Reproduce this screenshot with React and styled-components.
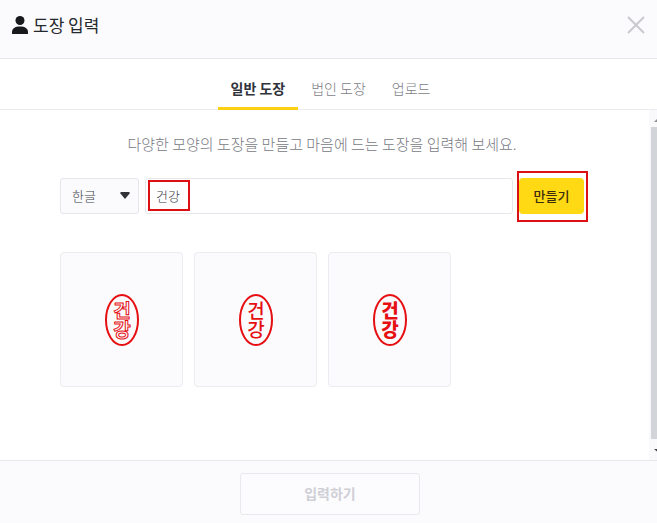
import React from 'react';
import styled, { createGlobalStyle } from 'styled-components';

const GlobalStyle = createGlobalStyle`
    * {
        box-sizing: border-box;
    }

    body {
        margin: 0;
        background: #fff;
    }

    body, button, input, select {
        font-family: "Noto Sans CJK KR", "Noto Sans", sans-serif;
    }
`;

const Dialog = styled.div`
    display: flex;
    flex-direction: column;
    min-height: 100vh;
    color: #25282d;
`;

const Header = styled.header`
    display: flex;
    align-items: center;
    justify-content: space-between;
    padding: 12px 12px 20px;
    background: #fbfbfe;
    border-bottom: 1px solid #e8e8ec;
`;

const Title = styled.h1`
    display: flex;
    align-items: center;
    gap: 5px;
    margin: 0;
    font-size: 17px;
    font-weight: 400;
    line-height: 26px;
`;

const CloseButton = styled.button`
    display: flex;
    padding: 0;
    border: 0;
    background: none;
    cursor: pointer;
`;

const Tabs = styled.nav`
    display: flex;
    justify-content: center;
    padding: 12px 0 0 4px;
    border-bottom: 1px solid #ebebee;
`;

const Tab = styled.button`
    padding: 5px 13px 7px;
    margin-bottom: -1px;
    border: 0;
    border-bottom: 3px solid ${props => (props.$active ? '#fccf12' : 'transparent')};
    background: none;
    color: ${props => (props.$active ? '#30333b' : '#7c7d86')};
    font-size: 14px;
    font-weight: ${props => (props.$active ? 700 : 300)};
    line-height: 24px;
    cursor: pointer;
`;

const Body = styled.main`
    display: flex;
    flex: 1;
`;

const Content = styled.div`
    flex: 1;
    padding: 22px 65px 40px 60px;
`;

const Guide = styled.p`
    margin: 0 0 22px;
    color: #777982;
    font-size: 15px;
    font-weight: 300;
    line-height: 24px;
    text-align: center;
`;

const Form = styled.form`
    display: flex;
    gap: 6px;
    margin-bottom: 38px;
`;

const SelectBox = styled.div`
    position: relative;
    width: 79px;

    svg {
        position: absolute;
        top: 14px;
        right: 9px;
        pointer-events: none;
    }
`;

const Select = styled.select`
    width: 100%;
    height: 36px;
    padding: 0 11px 2px;
    appearance: none;
    border: 1px solid #e6e7ec;
    border-radius: 3px;
    background: #fbfbfe;
    color: #3c3e46;
    font-size: 13px;
    font-weight: 300;
`;

const InputBox = styled.div`
    position: relative;
    flex: 1;
`;

const Input = styled.input`
    width: 100%;
    height: 36px;
    padding: 0 10px 2px;
    border: 1px solid #e6e7ec;
    border-radius: 3px;
    background: #fff;
    color: #3c3e46;
    font-size: 13px;
    font-weight: 300;
`;

const MakeBox = styled.div`
    position: relative;
    width: 65px;
`;

const MakeButton = styled.button`
    width: 100%;
    height: 36px;
    padding: 0 0 2px;
    border: 0;
    border-radius: 4px;
    background: #ffd913;
    color: #3b2c10;
    font-size: 13px;
    font-weight: 500;
    cursor: pointer;
`;

//강조 표시용 빨간 테두리
const Mark = styled.span`
    position: absolute;
    border: 2px solid #dc1013;
    pointer-events: none;
`;

const InputMark = styled(Mark)`
    top: 2px;
    left: 3px;
    width: 42px;
    height: 31px;
`;

const ButtonMark = styled(Mark)`
    top: -7px;
    right: -4px;
    bottom: -8px;
    left: -2px;
`;

const StampList = styled.div`
    display: flex;
    flex-wrap: wrap;
    gap: 11px;
`;

const StampButton = styled.button`
    display: flex;
    align-items: center;
    justify-content: center;
    width: 123px;
    height: 135px;
    padding: 0;
    border: 1px solid #ebebf0;
    border-radius: 4px;
    background: #fbfbfe;
    cursor: pointer;
`;

const StampText = styled.text`
    fill: ${props => (props.$outline ? 'none' : '#e60f12')};
    stroke: ${props => (props.$outline ? '#e60f12' : 'none')};
    font-family: "Noto Sans CJK KR", sans-serif;
    font-size: 19px;
    font-weight: ${props => props.$weight};
    text-anchor: middle;
    writing-mode: vertical-rl;
`;

const ScrollBar = styled.div`
    display: flex;
    flex-direction: column;
    align-items: flex-end;
    width: 8px;
    overflow: hidden;
    background: #f9f9fb;
`;

const ScrollThumb = styled.div`
    flex: 1;
    width: 6px;
    background: #d3d3da;
`;

const Footer = styled.footer`
    display: flex;
    justify-content: center;
    padding: 12px 0 8px 3px;
    border-top: 1px solid #e8e8ec;
    background: #fbfbfe;
`;

const SubmitButton = styled.button`
    width: 180px;
    height: 42px;
    padding: 0 0 2px;
    border: 1px solid #e9e9ed;
    border-radius: 3px;
    background: #fcfcfe;
    color: #cfcfd6;
    font-size: 14px;
    font-weight: 700;
`;

const tabs = ['일반 도장', '법인 도장', '업로드'];

const stampStyles = [
    { id: 'outline', weight: 700, outline: true },
    { id: 'regular', weight: 500 },
    { id: 'bold', weight: 900 },
];

const Stamp = ({ name, weight, outline }) => (
    <svg width="36" height="54" viewBox="0 0 36 54">
        <ellipse cx="18" cy="27" rx="16" ry="25" fill="none" stroke="#e60f12" strokeWidth="2" />
        <StampText x="18" y="27" $weight={weight} $outline={outline}>{name}</StampText>
    </svg>
);

const App = () => {
    const [tab, setTab] = React.useState(0);
    const [name, setName] = React.useState('건강');
    const [stamp, setStamp] = React.useState('건강');

    const handleSubmit = e => {
        e.preventDefault();
        if (name) {
            setStamp(name);
        }
    };

    return (
        <Dialog>
            <GlobalStyle />
            <Header>
                <Title>
                    <svg width="16" height="18" viewBox="0 0 16 18" fill="#17191d">
                        <circle cx="8" cy="4.5" r="4.5" />
                        <path d="M0 18v-2c0-3.500 3-5.500 8-5.500s8 2 8 5.500v2z" />
                    </svg>
                    도장 입력
                </Title>
                <CloseButton type="button" aria-label="닫기">
                    <svg width="18" height="18" viewBox="0 0 18 18" stroke="#cacace" strokeWidth="2">
                        <path d="M1 1l16 16M17 1L1 17" />
                    </svg>
                </CloseButton>
            </Header>

            <Tabs>
                {tabs.map((label, i) => (
                    <Tab key={label} type="button" $active={tab === i} onClick={() => setTab(i)}>{label}</Tab>
                ))}
            </Tabs>

            <Body>
                <Content>
                    <Guide>다양한 모양의 도장을 만들고 마음에 드는 도장을 입력해 보세요.</Guide>
                    <Form onSubmit={handleSubmit}>
                        <SelectBox>
                            <Select aria-label="언어">
                                <option>한글</option>
                            </Select>
                            <svg width="10" height="7" viewBox="0 0 10 7" fill="#303238">
                                <path d="M1 0h8l1 1-5 6-5-6z" />
                            </svg>
                        </SelectBox>
                        <InputBox>
                            <Input type="text" aria-label="이름" value={name} onChange={e => setName(e.target.value)} />
                            <InputMark />
                        </InputBox>
                        <MakeBox>
                            <MakeButton type="submit">만들기</MakeButton>
                            <ButtonMark />
                        </MakeBox>
                    </Form>
                    <StampList>
                        {stampStyles.map(({ id, weight, outline }) => (
                            <StampButton key={id} type="button">
                                <Stamp name={stamp} weight={weight} outline={outline} />
                            </StampButton>
                        ))}
                    </StampList>
                </Content>
                <ScrollBar>
                    <svg width="6" height="17" viewBox="0 0 6 17" fill="#8e8e93">
                        <path d="M3 12l4-4v4z" />
                    </svg>
                    <ScrollThumb />
                    <svg width="6" height="21" viewBox="0 0 6 21" fill="#404045">
                        <path d="M3 10h5v4z" />
                    </svg>
                </ScrollBar>
            </Body>

            <Footer>
                <SubmitButton type="button" disabled>입력하기</SubmitButton>
            </Footer>
        </Dialog>
    );
};

export default App;
